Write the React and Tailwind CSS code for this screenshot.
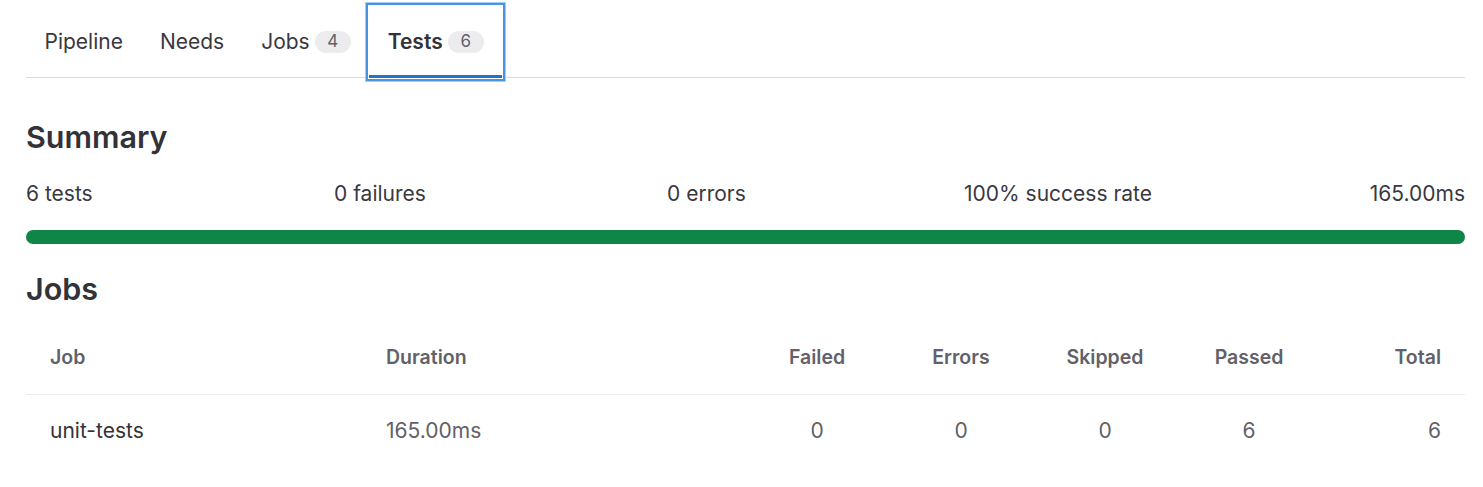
const tabs = [
  { name: "Pipeline" },
  { name: "Needs" },
  { name: "Jobs", count: 4 },
  { name: "Tests", count: 6, active: true },
];

const summary = [
  { text: "6 tests", w: "w-[308px]" },
  { text: "0 failures", w: "w-[333px]" },
  { text: "0 errors", w: "w-[297px]" },
  { text: "100% success rate", w: "flex-1" },
  { text: "165.00ms", w: "text-right" },
];

const jobs = [
  { name: "unit-tests", duration: "165.00ms", failed: 0, errors: 0, skipped: 0, passed: 6, total: 6 },
];

const cols = "grid grid-cols-[336px_383px_144px_144px_144px_144px_144px]";

export default function App() {
  return (
    <div className="min-h-screen bg-white pl-[26px] pr-[18px] pt-[6px] text-[#333238] font-['Inter','Noto_Sans',sans-serif] text-[21px]">
      <div className="flex border-b border-[#dcdcde]">
        {tabs.map((t) => (
          <div
            key={t.name}
            className={
              "flex h-[72px] items-center gap-[5px] px-[18.5px] -mb-px " +
              (t.active
                ? "font-semibold text-[#333238] shadow-[inset_0_-3px_0_#1f75cb,0_0_0_1px_#fff,0_0_0_3px_#4a93df,0_0_0_4px_#a4cbf2]"
                : "text-[#3a383f]")
            }
          >
            <span>{t.name}</span>
            {t.count !== undefined && (
              <span className="flex h-[22px] min-w-[36px] items-center justify-center rounded-full bg-[#ececef] px-3 text-[17px] font-normal text-[#626168]">
                {t.count}
              </span>
            )}
          </div>
        ))}
      </div>

      <h2 className="mt-[41px] text-[30.5px] font-semibold leading-[36px]">Summary</h2>
      <div className="mt-[27px] flex leading-[24px] text-[#3a383f]">
        {summary.map((s) => (
          <div key={s.text} className={s.w}>
            {s.text}
          </div>
        ))}
      </div>
      <div className="mt-[24px] h-[14px] rounded-full bg-[#108548]" />

      <h2 className="mt-[27px] text-[30.5px] font-semibold leading-[36px]">Jobs</h2>
      <div className="mt-[14px]">
        <div className={cols + " h-[74px] items-center border-b border-[#ececef] text-[19.5px] font-semibold text-[#626168]"}>
          <div className="pl-6">Job</div>
          <div className="pl-6">Duration</div>
          <div className="text-center">Failed</div>
          <div className="text-center">Errors</div>
          <div className="text-center">Skipped</div>
          <div className="text-center">Passed</div>
          <div className="pr-6 text-right">Total</div>
        </div>
        {jobs.map((j) => (
          <div key={j.name} className={cols + " h-[72px] items-center text-[#626168]"}>
            <div className="pl-6 text-[#333238]">{j.name}</div>
            <div className="pl-6">{j.duration}</div>
            <div className="text-center">{j.failed}</div>
            <div className="text-center">{j.errors}</div>
            <div className="text-center">{j.skipped}</div>
            <div className="text-center">{j.passed}</div>
            <div className="pr-6 text-right">{j.total}</div>
          </div>
        ))}
      </div>
    </div>
  );
}
